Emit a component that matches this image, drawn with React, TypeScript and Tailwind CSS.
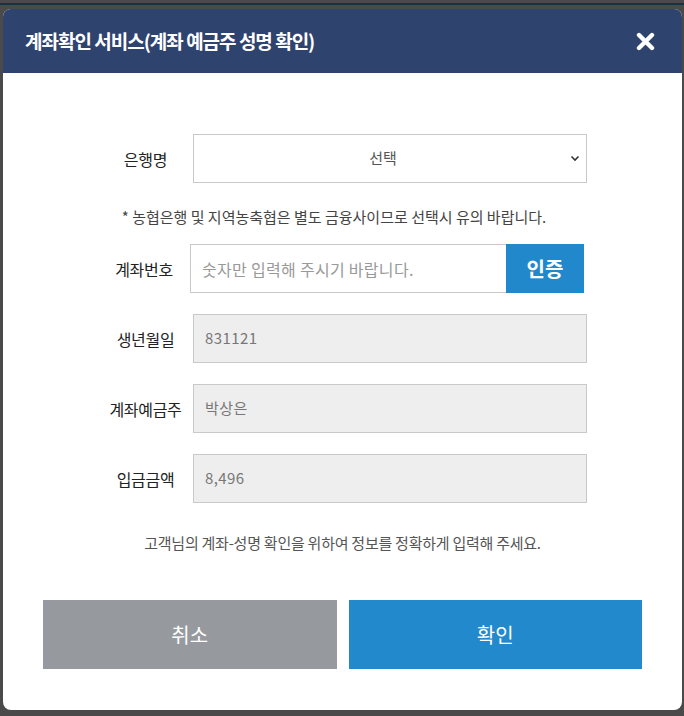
import React from 'react';

const font = { fontFamily: '"Noto Sans CJK KR", "Noto Sans", sans-serif' };

const ReadonlyRow: React.FC<{ label: string; value: string }> = ({ label, value }) => (
  <div className="flex items-center mt-[21px]">
    <div className="w-[95px] text-center text-[16px] text-[#222] tracking-[-0.3px]">{label}</div>
    <div className="flex-1 h-[49px] border border-[#c9c9c9] bg-[#eeeeee] flex items-center pl-[11px] text-[15px] text-[#777] tracking-[0.4px]">
      {value}
    </div>
  </div>
);

export default function App() {
  return (
    <div className="min-h-screen bg-[#4a4a4a]" style={font}>
      <div className="h-[3px]" />
      <div className="h-[2px] bg-[#173341]" />
      <div className="ml-[3px] mt-[4px] w-[679px] bg-white rounded-[8px] overflow-hidden">
        {/* Header */}
        <div className="h-[64px] bg-[#2f436f] flex items-center justify-between pl-[22px] pr-[27px]">
          <h1 className="text-white text-[19px] font-bold tracking-[-1px]">
            계좌확인 서비스(계좌 예금주 성명 확인)
          </h1>
          <svg width="19" height="19" viewBox="0 0 19 19" aria-label="닫기">
            <path d="M3 3 L16 16 M16 3 L3 16" stroke="#fff" strokeWidth="4.4" strokeLinecap="round" />
          </svg>
        </div>

        {/* Body */}
        <div className="px-[95px] pt-[61px]">
          <div className="flex items-center">
            <div className="w-[95px] text-center text-[16px] text-[#222] tracking-[-0.3px]">은행명</div>
            <div className="relative flex-1">
              <select
                className="w-full h-[49px] border border-[#c9c9c9] bg-white appearance-none text-center pr-[14px] text-[15px] text-[#555] outline-none"
                style={font}
                defaultValue=""
              >
                <option value="">선택</option>
              </select>
              <svg
                className="absolute right-[7px] top-[21px] pointer-events-none"
                width="10"
                height="7"
                viewBox="0 0 10 7"
              >
                <path d="M1.5 1.5 L5 5 L8.5 1.5" fill="none" stroke="#333" strokeWidth="1.6" />
              </svg>
            </div>
          </div>

          <p className="mt-[24px] mb-[17px] pr-[17px] leading-[20px] text-center text-[15px] text-[#444] tracking-[0px] whitespace-nowrap">
            * 농협은행 및 지역농축협은 별도 금융사이므로 선택시 유의 바랍니다.
          </p>

          <div className="flex items-center mr-[3px]">
            <div className="w-[92px] text-center text-[16px] text-[#222] tracking-[-0.3px]">계좌번호</div>
            <input
              className="flex-1 min-w-0 h-[49px] border border-[#c9c9c9] border-r-0 pl-[11px] text-[16px] tracking-[0.3px] text-[#333] placeholder:text-[#999] outline-none"
              style={font}
              placeholder="숫자만 입력해 주시기 바랍니다."
            />
            <button className="w-[78px] h-[49px] bg-[#2188cc] text-white text-[20px] font-bold">인증</button>
          </div>

          <ReadonlyRow label="생년월일" value="831121" />
          <ReadonlyRow label="계좌예금주" value="박상은" />
          <ReadonlyRow label="입금금액" value="8,496" />

          <p className="mt-[30px] leading-[20px] text-center text-[15px] text-[#555] tracking-[-0.25px]">
            고객님의 계좌-성명 확인을 위하여 정보를 정확하게 입력해 주세요.
          </p>
        </div>

        {/* Footer buttons */}
        <div className="grid grid-cols-2 gap-[12px] px-[40px] mt-[47px] pb-[41px]">
          <button className="h-[69px] bg-[#969a9e] text-white text-[20px]">취소</button>
          <button className="h-[69px] bg-[#2389cd] text-white text-[20px]">확인</button>
        </div>
      </div>
    </div>
  );
}
